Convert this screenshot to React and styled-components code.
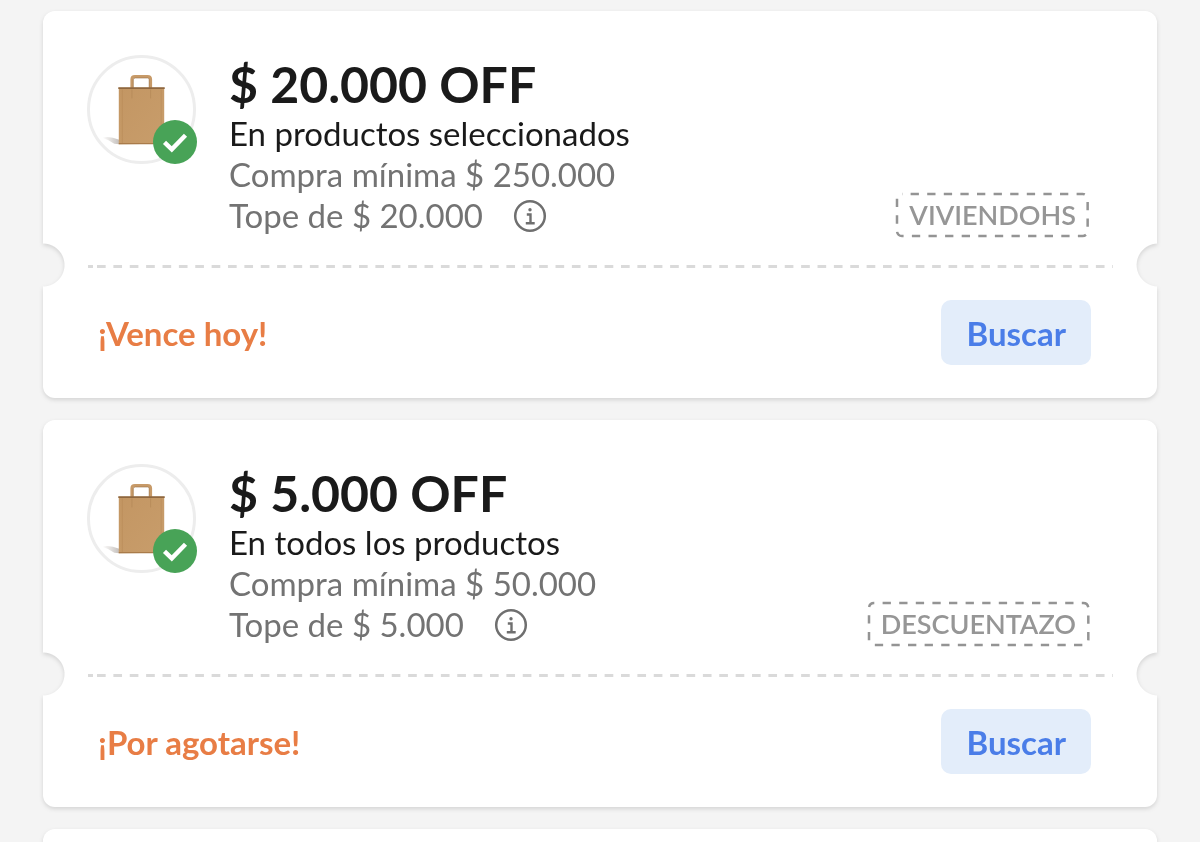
import styled, { createGlobalStyle } from "styled-components";

const defaultFont = `Lato, "Open Sans", sans-serif`;

const coupons = [
    {
        id: 1,
        title: "$ 20.000 OFF",
        target: "En productos seleccionados",
        minimum: "Compra mínima $ 250.000",
        limit: "Tope de $ 20.000",
        code: "VIVIENDOHS",
        notice: "¡Vence hoy!",
    },
    {
        id: 2,
        title: "$ 5.000 OFF",
        target: "En todos los productos",
        minimum: "Compra mínima $ 50.000",
        limit: "Tope de $ 5.000",
        code: "DESCUENTAZO",
        notice: "¡Por agotarse!",
    },
];

function Bag() {
    return (
        <BagSvg viewBox="0 0 108 108" aria-hidden="true">
            <defs>
                <linearGradient id="paper" x1="0" y1="0" x2="1" y2="1">
                    <stop offset="0" stopColor="#c39663" />
                    <stop offset="1" stopColor="#c89d6b" />
                </linearGradient>
                <linearGradient id="floor" x1="0" y1="0" x2="1" y2="0">
                    <stop offset="0" stopColor="#8a8078" stopOpacity="0" />
                    <stop offset="1" stopColor="#8a8078" stopOpacity="0.5" />
                </linearGradient>
            </defs>
            <path d="M15 82 Q22 80 32 84 V88.500 L27 88 Q22 84 15 82 Z" fill="url(#floor)" />
            <path d="M44.500 33 V24 Q44.500 21.300 47.500 21.300 H60 Q63 21.300 63 24 V33" fill="none" stroke="#c79a68" strokeWidth="3" />
            <path d="M45.800 33 V24.500 Q46 22.800 48 22.800 H60 Q61.600 22.800 61.600 24.500 V33" fill="none" stroke="#9a6f42" strokeWidth="0.600" />
            <path d="M31.500 32.500 H76.500 V88 L31.500 88.500 Z" fill="url(#paper)" />
            <path d="M31 32 H77 V33.600 H31 Z" fill="#8f673f" />
            <path d="M44.500 34 V43 M63 34 V43" stroke="#b58a58" strokeWidth="0.800" />
            <path d="M35 34 V88 M73.500 34 V88" stroke="#bb8d5a" strokeWidth="0.700" />
            <path d="M31.500 87.800 H76.500" stroke="#a97b4a" strokeWidth="1.200" />
        </BagSvg>
    );
}

function InfoIcon() {
    return (
        <svg width="34" height="34" viewBox="0 0 34 34" fill="none" aria-hidden="true">
            <circle cx="17" cy="17" r="14.800" stroke="#6f6f6f" strokeWidth="2.500" />
            <circle cx="17" cy="10.800" r="1.700" fill="#6f6f6f" />
            <path d="M13.800 15.500 H17.500 V24 M12.800 24.300 H21.700" stroke="#6f6f6f" strokeWidth="2.400" />
        </svg>
    );
}

function Coupon({ title, target, minimum, limit, code, notice }) {
    return (
        <Ticket>
            <Top>
                <Thumb>
                    <Bag />
                    <Badge>
                        <svg width="44" height="44" viewBox="0 0 44 44" fill="none" aria-hidden="true">
                            <path d="M11.500 22.300 L18.800 29.400 L32.500 15.300" stroke="#fff" strokeWidth="4.400" />
                        </svg>
                    </Badge>
                </Thumb>
                <Details>
                    <Title>{title}</Title>
                    <Line $dark>{target}</Line>
                    <Line>{minimum}</Line>
                    <Line>
                        {limit}
                        <InfoButton type="button" aria-label="Más información">
                            <InfoIcon />
                        </InfoButton>
                    </Line>
                </Details>
                <Code>
                    <CodeFrame aria-hidden="true">
                        <rect x="1" y="1" rx="5" strokeWidth="2.500" strokeDasharray="8.300 8.300" strokeDashoffset="8" />
                    </CodeFrame>
                    {code}
                </Code>
            </Top>
            <Perforation>
                <Dashes />
            </Perforation>
            <Bottom>
                <Notice>{notice}</Notice>
                <SearchButton type="button">Buscar</SearchButton>
            </Bottom>
        </Ticket>
    );
}

function App() {
    return (
        <>
            <GlobalStyle />
            <Page>
                {coupons.map((coupon) => (
                    <Coupon key={coupon.id} {...coupon} />
                ))}
                <NextTicket />
            </Page>
        </>
    );
}

const GlobalStyle = createGlobalStyle`
    * {
        box-sizing: border-box;
    }
    body {
        margin: 0;
        background-color: #f4f4f4;
        font-family: ${defaultFont};
    }
`;

const Page = styled.main`
    min-height: 100vh;
    padding: 11px 43px 0 43px;
    display: flex;
    flex-direction: column;
    gap: 22px;
`;

const Ticket = styled.article`
    display: flex;
    flex-direction: column;
    filter: drop-shadow(0 2px 2px rgba(0, 0, 0, 0.13));
`;

const Top = styled.div`
    display: flex;
    padding: 44px 68px 6px 44px;
    background-color: #fff;
    border-radius: 12px 12px 0 0;
`;

const Thumb = styled.div`
    position: relative;
    flex-shrink: 0;
    width: 109px;
    height: 109px;
    margin-right: 33px;
    border: 3px solid #ededed;
    border-radius: 50%;
`;

const BagSvg = styled.svg`
    display: block;
    width: 109px;
    height: 109px;
    margin: -3px;
`;

const Badge = styled.span`
    position: absolute;
    right: -4px;
    bottom: -3px;
    width: 44px;
    height: 44px;
    background-color: #48a357;
    border-radius: 50%;
`;

const Details = styled.div`
    flex: 1;
    padding-bottom: 1px;
`;

const Title = styled.h2`
    margin: 0;
    font-size: 50px;
    font-weight: 700;
    line-height: 58px;
    color: #1a1a1a;
`;

const Line = styled.p`
    display: flex;
    align-items: center;
    gap: 30px;
    height: 41px;
    margin: 0;
    font-size: 33px;
    font-weight: 400;
    line-height: 41px;
    color: ${({ $dark }) => ($dark ? "#1a1a1a" : "#737373")};
`;

const InfoButton = styled.button`
    display: flex;
    padding: 0;
    border: none;
    background: none;
    cursor: pointer;
`;

const Code = styled.span`
    position: relative;
    align-self: flex-end;
    height: 44px;
    padding: 0 13px;
    font-size: 27px;
    font-weight: 600;
    line-height: 43px;
    color: #969696;
`;

const CodeFrame = styled.svg`
    position: absolute;
    top: 0;
    left: 0;
    width: 100%;
    height: 100%;
    overflow: visible;

    rect {
        width: calc(100% - 2px);
        height: calc(100% - 2px);
        fill: none;
        stroke: #949494;
    }
`;

/* the row that carries the two half-circle cuts */
const Perforation = styled.div`
    display: flex;
    align-items: center;
    height: 44px;
    padding: 2px 44px 0 45px;
    background:
        radial-gradient(circle at 0 50%, transparent 21px, #fff 22px) left / 51% 100% no-repeat,
        radial-gradient(circle at calc(100% + 1px) 50%, transparent 21px, #fff 22px) right / 51% 100% no-repeat;
`;

const Dashes = styled.div`
    flex: 1;
    display: flex;
    gap: 4px;

    &::before,
    &::after {
        content: "";
        height: 3px;
    }
    &::before {
        width: 5px;
        background-color: #dadada;
    }
    &::after {
        flex: 1;
        background: linear-gradient(90deg, #dadada 50%, transparent 50%) 0 0 / calc(100% / 62) 3px;
    }
`;

const Bottom = styled.div`
    display: flex;
    align-items: center;
    justify-content: space-between;
    padding: 13px 66px 33px 55px;
    background-color: #fff;
    border-radius: 0 0 12px 12px;
`;

const Notice = styled.strong`
    font-size: 33px;
    font-weight: 700;
    line-height: 38px;
    color: #e87d45;
`;

const SearchButton = styled.button`
    height: 65px;
    padding: 0 25px;
    border: none;
    border-radius: 10px;
    background-color: #e3edfa;
    font-family: ${defaultFont};
    font-size: 33px;
    font-weight: 700;
    line-height: 38px;
    color: #4a7de8;
    cursor: pointer;
`;

const NextTicket = styled.div`
    flex: 1;
    min-height: 13px;
    background-color: #fff;
    border-radius: 12px 12px 0 0;
    filter: drop-shadow(0 2px 2px rgba(0, 0, 0, 0.13));
`;

export default App;
